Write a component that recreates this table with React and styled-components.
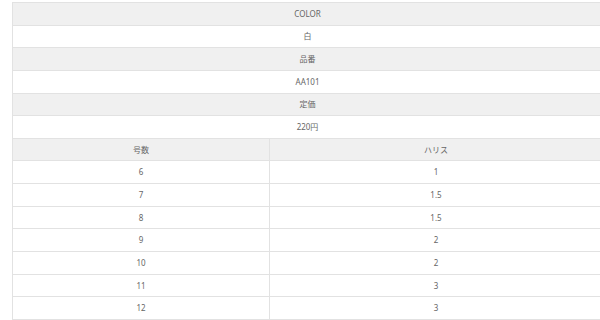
import React from 'react';
import styled, { createGlobalStyle } from 'styled-components';

const GlobalStyle = createGlobalStyle`
  html, body {
    margin: 0;
    padding: 0;
    background: #fff;
    overflow: hidden;
  }
`;

const Page = styled.div`
  padding: 2px 0 0 12px;
  font-family: 'Noto Sans', 'Noto Sans CJK JP', sans-serif;
`;

const Table = styled.div`
  width: 591px;
  display: grid;
  grid-template-columns: 257px 1fr;
  grid-auto-rows: 22.65px;
  border-top: 1px solid #e2e2e2;
  border-left: 1px solid #e2e2e2;
  box-sizing: border-box;
`;

const Cell = styled.div`
  grid-column: ${(p) => (p.$full ? '1 / span 2' : 'auto')};
  display: flex;
  align-items: center;
  justify-content: center;
  box-sizing: border-box;
  border-right: 1px solid #e2e2e2;
  border-bottom: 1px solid #e2e2e2;
  background: ${(p) => (p.$head ? '#f0f0f0' : '#fff')};
  color: #666;
  font-size: 8px;
  line-height: 1;
`;

const info = [
  ['COLOR', '白'],
  ['品番', 'AA101'],
  ['定価', '220円'],
];

const sizes = [
  ['6', '1'],
  ['7', '1.5'],
  ['8', '1.5'],
  ['9', '2'],
  ['10', '2'],
  ['11', '3'],
  ['12', '3'],
];

export default function App() {
  return (
    <Page>
      <GlobalStyle />
      <Table>
        {info.map(([label, value]) => (
          <React.Fragment key={label}>
            <Cell $full $head>{label}</Cell>
            <Cell $full>{value}</Cell>
          </React.Fragment>
        ))}
        <Cell $head>号数</Cell>
        <Cell $head>ハリス</Cell>
        {sizes.map(([no, line]) => (
          <React.Fragment key={no}>
            <Cell>{no}</Cell>
            <Cell>{line}</Cell>
          </React.Fragment>
        ))}
      </Table>
    </Page>
  );
}
